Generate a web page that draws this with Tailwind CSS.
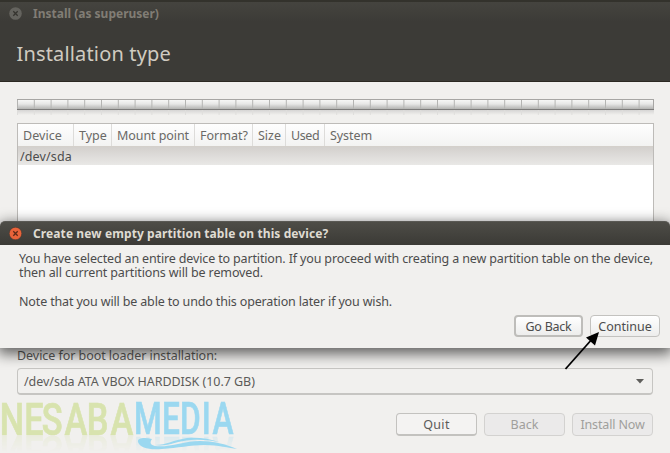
<!DOCTYPE html>
<html lang="en">
<head>
<meta charset="utf-8">
<title>Install (as superuser)</title>
<script src="https://cdn.jsdelivr.net/npm/@tailwindcss/browser@4"></script>
</head>
<body class="relative h-[453px] w-[670px] overflow-hidden bg-[#f1f0ee] font-['Noto_Sans','Open_Sans',sans-serif] text-[12.5px] leading-[15px] whitespace-nowrap text-[#4c4c4c]">

  <header class="h-[82px] border-t-2 border-b border-t-[#33322c] border-b-[#2b2822] bg-gradient-to-b from-[#45443f] via-[#3c3b37] via-25% to-[#3c3b37]">
    <div class="flex h-[23px] items-center pl-[9px]">
      <svg class="h-[13px] w-[13px]" viewBox="0 0 13 13"><circle cx="6.5" cy="6.5" r="6.3" fill="#64635e"/><path d="M4.3 4.3l4.4 4.4M8.7 4.3L4.3 8.7" stroke="#35342f" stroke-width="1.3"/></svg>
      <h1 class="ml-[11px] text-[12px] font-bold text-[#817d75]">Install (as superuser)</h1>
    </div>
    <h2 class="mt-[15px] pl-[16.5px] text-[20px] leading-[28px] tracking-[0.16px] text-[#d0cbc1]">Installation type</h2>
  </header>

  <main class="px-[17px] pt-[17px]">
    <svg class="block h-[18px] w-[637px]" viewBox="0 0 637 18">
      <defs>
        <linearGradient id="bar" x2="0" y2="1"><stop offset="0" stop-color="#fbfbfa"/><stop offset=".45" stop-color="#e7e7e6"/><stop offset="1" stop-color="#a9a9a7"/></linearGradient>
        <linearGradient id="fade" x2="0" y2="1"><stop offset="0" stop-color="#d6d5d4"/><stop offset="1" stop-color="#f1f0ee"/></linearGradient>
        <pattern id="ticks" width="16.8" height="18" patternUnits="userSpaceOnUse"><path d="M.5 0v11" stroke="#b4b4b2"/><path d="M.5 11v5" stroke="#dfdedc"/></pattern>
      </defs>
      <rect y="11" width="637" height="5" fill="url(#fade)"/>
      <rect width="637" height="11" fill="url(#bar)"/>
      <rect width="637" height="17" fill="url(#ticks)"/>
      <path d="M0 .5h637M636.5 0v11" stroke="#a7a6a4"/>
      <path d="M0 10.5h637" stroke="#7d7c7b"/>
    </svg>

    <section class="mt-[6px] h-[130px] w-[637px] border border-[#bdbbb8] bg-white">
      <div class="flex h-[23px] items-center border-b border-[#d4d0cb] bg-gradient-to-b from-[#fefefe] to-[#f3f3f2] text-[#6a6966]">
        <div class="flex h-full w-[56px] items-center border-r border-[#dddcda] pl-[5px] tracking-[0.07px]">Device</div>
        <div class="flex h-full w-[38px] items-center border-r border-[#dddcda] pl-[5px]">Type</div>
        <div class="flex h-full w-[83px] items-center border-r border-[#dddcda] pl-[5px] tracking-[-0.07px]">Mount point</div>
        <div class="flex h-full w-[58px] items-center border-r border-[#dddcda] pl-[5px]">Format?</div>
        <div class="flex h-full w-[33px] items-center border-r border-[#dddcda] pl-[5px]">Size</div>
        <div class="flex h-full w-[39px] items-center border-r border-[#dddcda] pl-[5px] tracking-[-0.4px]">Used</div>
        <div class="flex h-full items-center pl-[5px] tracking-[-0.07px]">System</div>
      </div>
      <div class="flex h-[18px] items-center bg-gradient-to-b from-[#d3d0cd] to-[#e9e8e6] pl-[2px] tracking-[0.14px]">/dev/sda</div>
    </section>

    <label class="mt-[94px] block h-[19px] pt-[1px] tracking-[-0.05px] text-[#5c5b59]">Device for boot loader installation:</label>
    <div class="mt-[2px] flex h-[27px] w-[636px] items-center justify-between rounded-[4px] border border-b-2 border-[#c6c5c2] pt-[1px] pr-[8px] pl-[6px] tracking-[-0.04px] text-[#5c5b59]">
      <span>/dev/sda ATA VBOX HARDDISK (10.7 GB)</span>
      <svg class="h-[5px] w-[8px]" viewBox="0 0 8 5"><path d="M0 0h8L4 4.6z" fill="#5f5e5b"/></svg>
    </div>
    <div class="mt-[18px] flex w-[636px] justify-end gap-[7px]">
      <div class="flex h-[23px] w-[81px] items-center justify-center rounded-[4px] border border-b-2 border-[#c3c2bf] bg-[#f4f3f2] pt-[1px] tracking-[0.3px] text-[#5c5b59]">Quit</div>
      <div class="flex h-[23px] w-[81px] items-center justify-center rounded-[4px] border border-[#d3d2d0] bg-[#ebeaea] text-[#a09f9c]">Back</div>
      <div class="flex h-[23px] w-[81px] items-center justify-center rounded-[4px] border border-[#d3d2d0] bg-[#ebeaea] tracking-[-0.15px] text-[#a09f9c]">Install Now</div>
    </div>
  </main>

  <!-- Watermark -->
  <svg class="absolute top-[395px] left-0 h-[40px] w-[245px] overflow-visible [-webkit-box-reflect:below_1px_linear-gradient(transparent_60%,rgba(0,0,0,0.25))]" viewBox="0 0 245 40" font-family="Roboto, sans-serif" font-size="44" font-weight="500" stroke-width=".7">
    <text transform="scale(.78 1)" x="-0.2 31.2 53.5 82.8 111.3 141.8" y="39.7" fill="#d8e3ae" stroke="#d8e3ae">NESABA</text>
    <text transform="scale(.72 1)" x="186 225 250 280.3 295.3" y="38.7" fill="#9bd8f0" stroke="#9bd8f0">MEDIA</text>
  </svg>
  <svg class="absolute top-[435px] left-[130px] h-[18px] w-[115px]" viewBox="130 435 115 18" fill="#9bd8f0">
    <path d="M152 439C144 437 137 438 138 442C140 448 149 450 162 449C178 448 190 445 205 445C218 445 229 448 237 449C226 444 213 441 200 441C184 441 168 448 155 446C151 445 149 443 152 439Z"/>
    <path d="M155 445C168 447 176 441 191 440C203 439 212 441 219 442C209 438 196 437 187 438C173 440 167 445 155 445Z"/>
  </svg>

  <!-- Confirmation dialog -->
  <section class="absolute top-[221px] left-0 h-[127px] w-[670px] rounded-t-[5px] bg-[#f1f0ee] shadow-[0_4px_14px_2px_rgba(0,0,0,0.6)]">
    <div class="flex h-[24px] items-center rounded-t-[5px] border-t border-[#5a5954] bg-gradient-to-b from-[#4e4d47] to-[#3b3a36] pl-[9px]">
      <svg class="h-[13px] w-[13px]" viewBox="0 0 13 13"><circle cx="6.5" cy="6.5" r="6.3" fill="#e9633a" stroke="#33322e" stroke-width=".5"/><path d="M4.3 4.3l4.4 4.4M8.7 4.3L4.3 8.7" stroke="#5d2a18" stroke-width="1.3"/></svg>
      <h3 class="ml-[11px] text-[12px] font-bold tracking-[0.1px] text-[#dfdbd2]">Create new empty partition table on this device?</h3>
    </div>
    <div class="pt-[7px] pl-[19px] leading-[14.4px]">
      <p class="tracking-[-0.146px]">You have selected an entire device to partition. If you proceed with creating a new partition table on the device,</p>
      <p class="tracking-[-0.12px]">then all current partitions will be removed.</p>
      <p class="mt-[14px] tracking-[-0.15px]">Note that you will be able to undo this operation later if you wish.</p>
    </div>
    <div class="mt-[6px] flex justify-end gap-[7px] pr-[10px]">
      <div class="flex h-[22px] w-[69px] items-center justify-center rounded-[4px] border-2 border-[#bebdba] bg-gradient-to-b from-white to-[#ededec] tracking-[-0.25px]">Go Back</div>
      <div class="flex h-[22px] w-[70px] items-center justify-center rounded-[4px] border border-[#c3c2bf] bg-gradient-to-b from-white to-[#ededec]">Continue</div>
    </div>
  </section>

  <svg class="absolute top-[328px] left-[560px] h-[45px] w-[45px]" viewBox="0 0 45 45"><path d="M5.5 41L33 10" stroke="#000" stroke-width="1.8"/><path d="M39 4L35 17.5L26 9.5Z"/></svg>
</body>
</html>
